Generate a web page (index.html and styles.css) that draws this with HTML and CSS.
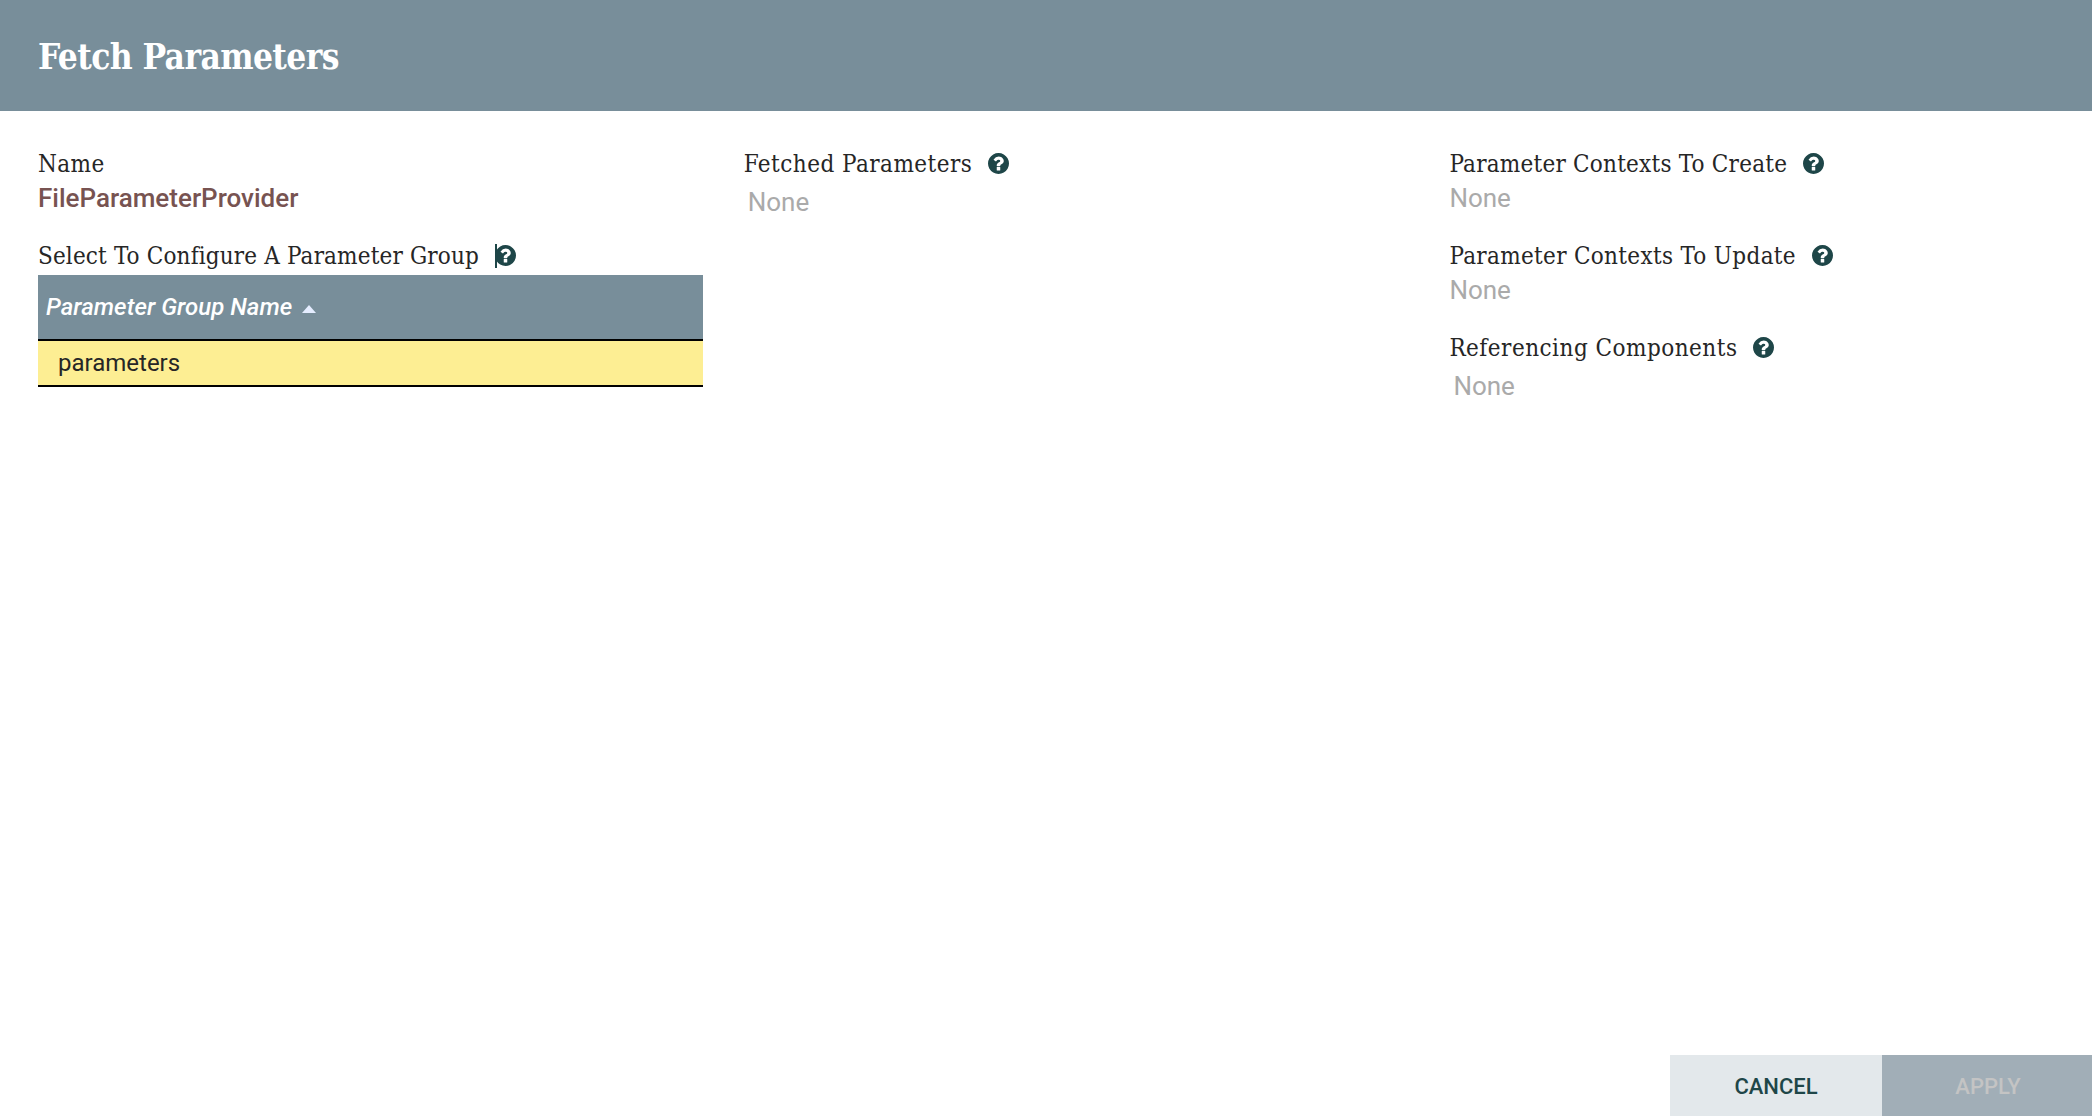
FILE: index.html
```html
<!DOCTYPE html>
<html lang="en">
<head>
<meta charset="utf-8">
<title>Fetch Parameters</title>
<link rel="stylesheet" href="styles.css">
</head>
<body>
<svg width="0" height="0" class="defs" aria-hidden="true">
  <symbol id="help" viewBox="0 0 1536 1536">
    <path d="M896 1248v-192q0-14-9-23t-23-9h-192q-14 0-23 9t-9 23v192q0 14 9 23t23 9h192q14 0 23-9t9-23zM1152 576q0-88-55.500-163t-138.500-116-170-41q-243 0-371 213-15 24 8 42l132 100q7 6 19 6 16 0 25-12 53-68 86-92 34-24 86-24 48 0 85.500 26t37.500 59q0 38-20 61t-68 45q-63 28-115.500 86.500t-52.500 125.500v36q0 14 9 23t23 9h192q14 0 23-9t9-23q0-19 21.500-49.500t54.500-49.500q32-18 49-28.500t46-35 44.500-48 28-60.500 12.500-81zM1536 768q0 209-103 385.500t-279.500 279.500-385.500 103-385.500-103-279.500-279.500-103-385.500 103-385.500 279.500-279.500 385.500-103 385.500 103 279.500 279.500 103 385.500z"/>
  </symbol>
</svg>
<div class="dialog">
  <header class="header"><h1 class="title">Fetch Parameters</h1></header>
  <main class="content">
    <section class="column">
      <div class="setting">
        <div class="label"><span class="name">Name</span></div>
        <div class="value provider">FileParameterProvider</div>
      </div>
      <div class="setting">
        <div class="label"><span class="select">Select To Configure A Parameter Group</span><span class="help focused"><svg class="icon"><use href="#help"/></svg></span></div>
        <div class="table">
          <div class="table-header"><span>Parameter Group Name</span><i class="sort"></i></div>
          <div class="table-row">parameters</div>
        </div>
      </div>
    </section>
    <section class="column">
      <div class="setting">
        <div class="label"><span class="fetched">Fetched Parameters</span><span class="help"><svg class="icon"><use href="#help"/></svg></span></div>
        <div class="value unset inset">None</div>
      </div>
    </section>
    <section class="column">
      <div class="setting">
        <div class="label"><span class="create">Parameter Contexts To Create</span><span class="help"><svg class="icon"><use href="#help"/></svg></span></div>
        <div class="value unset">None</div>
      </div>
      <div class="setting">
        <div class="label"><span class="update">Parameter Contexts To Update</span><span class="help"><svg class="icon"><use href="#help"/></svg></span></div>
        <div class="value unset">None</div>
      </div>
      <div class="setting">
        <div class="label"><span class="referencing">Referencing Components</span><span class="help"><svg class="icon"><use href="#help"/></svg></span></div>
        <div class="value unset inset">None</div>
      </div>
    </section>
  </main>
  <footer class="buttons">
    <button class="button cancel">CANCEL</button>
    <button class="button apply" disabled>APPLY</button>
  </footer>
</div>
</body>
</html>
```
FILE: styles.css
```css
* { box-sizing: border-box; }
body { margin: 0; background: #fff; color: #262626; font-family: Roboto, "Liberation Sans", sans-serif; }
.defs { display: block; }
.dialog { display: flex; flex-direction: column; height: 100vh; overflow: hidden; }
.header { height: 111px; padding: 2px 0 0 38px; background: #788e9a; display: flex; align-items: center; flex: none; }
.title { margin: 0; color: #fff; font: bold 35px/48px "Roboto Slab", "DejaVu Serif Condensed", "DejaVu Serif", serif; letter-spacing: -0.6px; white-space: nowrap; }
.content { flex: 1; display: grid; grid-template-columns: 665px 665px 604px; column-gap: 40.7px; padding: 36px 0 0 38px; align-content: start; }
.column { display: flex; flex-direction: column; gap: 24px; }
.setting { min-height: 68px; }
.label { height: 34px; padding-bottom: 1px; display: flex; align-items: center; gap: 16px; font: 24px/32px "Roboto Slab", "DejaVu Serif Condensed", "DejaVu Serif", serif; white-space: nowrap; }
.column .setting + .setting { margin-top: -1px; min-height: 69px; }
.column .setting:first-child { min-height: 69px; }
.name { letter-spacing: 0.4px; }
.select { letter-spacing: 0.15px; }
.fetched { letter-spacing: 0.47px; }
.create { letter-spacing: 0.23px; }
.update { letter-spacing: 0.32px; }
.referencing { letter-spacing: 0.48px; }
.help { display: flex; width: 21px; height: 24px; align-items: center; justify-content: center; }
.focused { border-left: 2px solid #1e4648; }
.icon { width: 21px; height: 21px; fill: #1e4648; flex: none; }
.focused .icon { margin-left: -1px; }
.value { font-size: 26px; line-height: 35px; }
.provider { font-weight: 500; color: #775351; }
.unset { color: #aaa; }
.inset { padding: 4px 0 0 4px; }
.table { margin-top: 2px; }
.table-header { height: 64px; padding-left: 8px; background: #788e9a; color: #fff; display: flex; align-items: center; gap: 10px; font: italic 500 24px/28px Roboto, sans-serif; letter-spacing: 0.04px; }
.sort { border: 7.5px solid transparent; border-top: 0; border-bottom: 8px solid #e5edff; margin-top: 4px; }
.table-row { height: 48px; border: solid #000; border-width: 2px 0; padding-left: 20px; background: #fdee93; font-size: 24px; line-height: 44px; }
.buttons { display: flex; justify-content: flex-end; flex: none; height: 61px; }
.button { border: 0; padding: 3px 0 0; font: 500 22px/26px Roboto, sans-serif; }
.cancel { width: 212px; background: #e3e8eb; color: #1e4648; }
.apply { width: 210px; padding-left: 2px; background: #a1aeb7; color: #c4c4c4; }
```
